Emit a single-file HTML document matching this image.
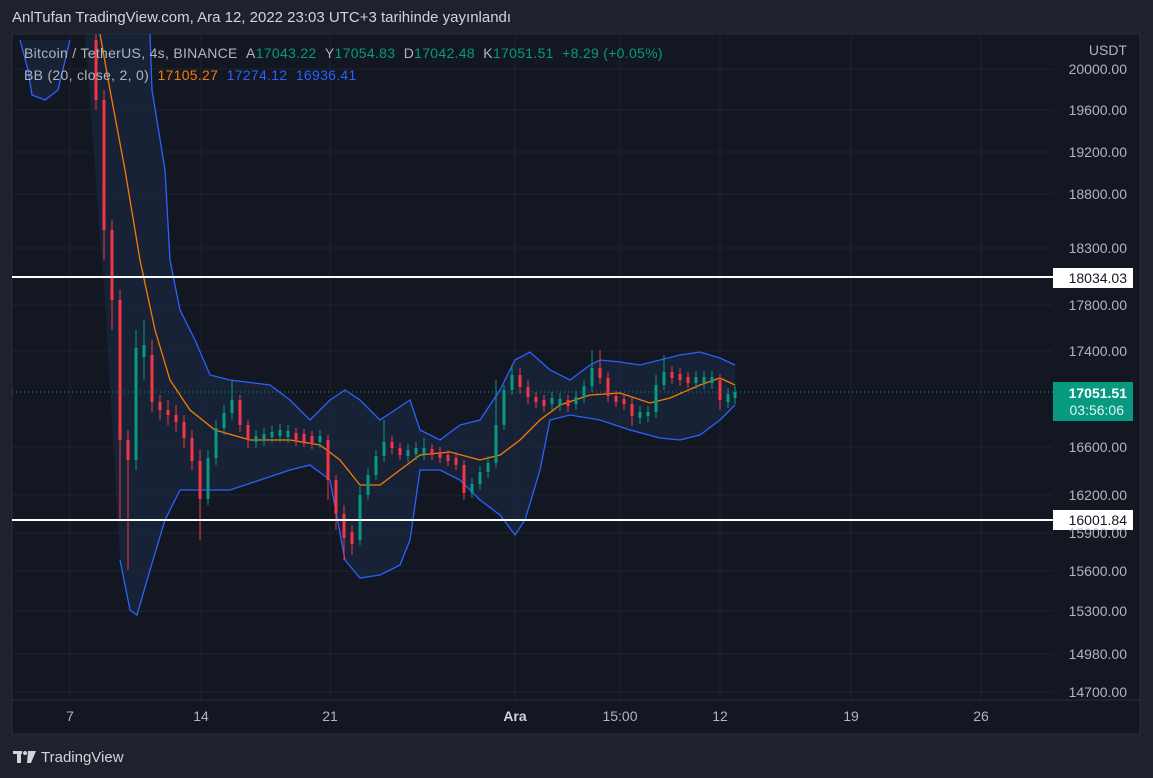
<!DOCTYPE html>
<html><head><meta charset="utf-8"><style>
body{margin:0;width:1153px;height:778px;background:#1f222c;overflow:hidden;font-family:"Liberation Sans",sans-serif;position:relative}
.t{position:absolute;white-space:nowrap}
</style></head><body>
<div class="t" style="left:12px;top:9px;font-size:15px;color:#d1d4dc">AnlTufan TradingView.com, Ara 12, 2022 23:03 UTC+3 tarihinde yayınlandı</div>
<svg xmlns="http://www.w3.org/2000/svg" style="position:absolute;left:0;top:0" width="1153" height="778">
<rect x="12" y="34" width="1128" height="700" fill="#131722" stroke="#2a2e39"/>
<g stroke="#1f2330" stroke-width="1">
<line x1="12" x2="1053" y1="69" y2="69"/><line x1="12" x2="1053" y1="110" y2="110"/><line x1="12" x2="1053" y1="152" y2="152"/><line x1="12" x2="1053" y1="194" y2="194"/><line x1="12" x2="1053" y1="248" y2="248"/><line x1="12" x2="1053" y1="305" y2="305"/><line x1="12" x2="1053" y1="351" y2="351"/><line x1="12" x2="1053" y1="447" y2="447"/><line x1="12" x2="1053" y1="495" y2="495"/><line x1="12" x2="1053" y1="533" y2="533"/><line x1="12" x2="1053" y1="571" y2="571"/><line x1="12" x2="1053" y1="611" y2="611"/><line x1="12" x2="1053" y1="654" y2="654"/><line x1="12" x2="1053" y1="692" y2="692"/>
<line x1="70" x2="70" y1="34" y2="700"/><line x1="201" x2="201" y1="34" y2="700"/><line x1="330" x2="330" y1="34" y2="700"/><line x1="515" x2="515" y1="34" y2="700"/><line x1="620" x2="620" y1="34" y2="700"/><line x1="720" x2="720" y1="34" y2="700"/><line x1="851" x2="851" y1="34" y2="700"/><line x1="981" x2="981" y1="34" y2="700"/>
</g>
<line x1="12" x2="1140" y1="700" y2="700" stroke="#2a2e39"/>
<polygon fill="#1c2a44" fill-opacity="0.6" points="20,40 28,70 32,95 45,100 58,90 70,40"/>
<polygon fill="#1c2a44" fill-opacity="0.6" points="85,34 150,34 152,90 165,170 170,260 180,310 195,340 210,375 230,380 270,385 290,400 310,420 330,400 345,390 360,400 380,420 395,410 410,400 420,430 440,440 460,425 480,420 500,390 515,360 530,352 550,370 570,380 590,365 600,360 620,362 640,365 660,360 680,355 700,352 720,358 735,365 735,405 720,420 700,435 680,440 660,438 630,430 600,420 570,415 550,420 540,470 525,520 515,535 500,515 480,500 460,480 440,470 420,470 410,540 400,565 380,575 360,578 345,560 330,480 310,465 290,470 260,480 230,490 200,490 180,490 165,520 150,570 137,615 130,610 120,560 105,300"/>
<polyline fill="none" stroke="#2962ff" stroke-width="1.3" points="20,40 28,70 32,95 45,100 58,90 70,40"/>
<polyline fill="none" stroke="#2962ff" stroke-width="1.3" points="150,34 152,90 165,170 170,260 180,310 195,340 210,375 230,380 270,385 290,400 310,420 330,400 345,390 360,400 380,420 395,410 410,400 420,430 440,440 460,425 480,420 500,390 515,360 530,352 550,370 570,380 590,365 600,360 620,362 640,365 660,360 680,355 700,352 720,358 735,365"/>
<polyline fill="none" stroke="#2962ff" stroke-width="1.3" points="120,560 130,610 137,615 150,570 165,520 180,490 200,490 230,490 260,480 290,470 310,465 330,480 345,560 360,578 380,575 400,565 410,540 420,470 440,470 460,480 480,500 500,515 515,535 525,520 540,470 550,420 570,415 600,420 630,430 660,438 680,440 700,435 720,420 735,405"/>
<polyline fill="none" stroke="#f57c00" stroke-width="1.3" points="100,34 110,90 125,170 140,260 155,330 170,380 190,410 215,430 250,440 290,440 320,445 340,460 360,485 380,485 400,470 420,455 450,452 480,460 500,455 520,440 540,420 560,405 590,395 620,393 650,403 670,398 700,385 720,378 735,385"/>
<path fill="none" stroke="#f23645" stroke-width="1" d="M96 34V110 M104 90V260 M112 220V330 M120 290V520 M128 430V570 M152 340V412 M160 395V420 M168 400V425 M176 405V432 M184 415V448 M192 430V470 M200 450V540 M240 395V432 M248 420V448 M296 428V446 M304 429V447 M312 431V449 M328 435V500 M336 475V530 M344 505V560 M352 525V555 M392 436V454 M400 443V460 M432 444V460 M440 447V463 M448 450V466 M456 452V470 M464 460V500 M520 368V394 M528 380V404 M536 392V408 M544 395V412 M568 395V412 M600 350V384 M608 372V402 M616 391V407 M624 394V410 M632 398V426 M672 366V384 M680 368V386 M688 372V388 M720 374V410"/>
<path fill="none" stroke="#f23645" stroke-width="3" d="M96 40V100 M104 100V230 M112 230V300 M120 300V440 M128 440V460 M152 355V402 M160 402V410 M168 410V415 M176 415V422 M184 422V438 M192 438V461 M200 461V499 M240 400V425 M248 425V440 M296 433V441 M304 434V442 M312 436V444 M328 440V480 M336 480V514 M344 514V538 M352 532V544 M392 442V448 M400 448V455 M432 449V455 M440 452V458 M448 455V461 M456 458V465 M464 465V493 M520 375V387 M528 387V397 M536 397V402 M544 400V406 M568 400V406 M600 368V378 M608 378V396 M616 396V402 M624 399V404 M632 404V416 M672 372V378 M680 374V380 M688 377V383 M720 380V400"/>
<path fill="none" stroke="#089981" stroke-width="1" d="M136 330V470 M144 320V380 M208 450V505 M216 420V465 M224 405V435 M232 380V420 M256 430V448 M264 428V446 M272 426V443 M280 424V442 M288 425V443 M320 430V448 M360 485V545 M368 468V500 M376 450V480 M384 420V462 M408 444V462 M416 442V460 M424 438V460 M472 478V498 M480 466V490 M488 456V478 M496 380V468 M504 385V430 M512 365V395 M552 392V410 M560 393V411 M576 391V410 M584 380V403 M592 350V392 M640 406V424 M648 406V422 M656 375V418 M664 355V390 M696 371V389 M704 371V389 M712 371V389 M728 388V408 M735 386V404"/>
<path fill="none" stroke="#089981" stroke-width="3" d="M136 348V460 M144 345V357 M208 458V499 M216 428V458 M224 413V428 M232 400V413 M256 436V442 M264 434V440 M272 432V437 M280 430V436 M288 431V437 M320 436V442 M360 495V540 M368 475V495 M376 456V475 M384 442V456 M408 450V456 M416 448V454 M424 448V454 M472 484V493 M480 472V484 M488 463V472 M496 425V463 M504 390V425 M512 375V390 M552 398V404 M560 399V405 M576 397V404 M584 386V397 M592 368V386 M640 412V418 M648 412V416 M656 385V412 M664 372V385 M696 377V383 M704 377V383 M712 377V383 M728 394V402 M735 392V398"/>
<line x1="12" x2="1053" y1="392" y2="392" stroke="#089981" stroke-dasharray="1,3"/>
<line x1="12" x2="1053" y1="277" y2="277" stroke="#fff" stroke-width="2"/>
<line x1="12" x2="1053" y1="520" y2="520" stroke="#fff" stroke-width="2"/>
<rect x="1053" y="268" width="80" height="20" fill="#fff"/>
<rect x="1053" y="510" width="80" height="20" fill="#fff"/>
<rect x="1053" y="382" width="80" height="39" fill="#089981"/>
<g font-family="Liberation Sans,sans-serif" font-size="14" fill="#b2b5be" text-anchor="end">
<text x="1127" y="55">USDT</text>
<text x="1127" y="74">20000.00</text><text x="1127" y="115">19600.00</text><text x="1127" y="157">19200.00</text><text x="1127" y="199">18800.00</text><text x="1127" y="253">18300.00</text><text x="1127" y="310">17800.00</text><text x="1127" y="356">17400.00</text><text x="1127" y="452">16600.00</text><text x="1127" y="500">16200.00</text><text x="1127" y="538">15900.00</text><text x="1127" y="576">15600.00</text><text x="1127" y="616">15300.00</text><text x="1127" y="659">14980.00</text><text x="1127" y="697">14700.00</text>
<text x="1127" y="283" fill="#131722">18034.03</text><text x="1127" y="525" fill="#131722">16001.84</text>
<text x="1127" y="398" fill="#fff" font-weight="bold">17051.51</text><text x="1124" y="415" fill="#e0f2ef">03:56:06</text>
</g>
<g font-family="Liberation Sans,sans-serif" font-size="14" fill="#b2b5be" text-anchor="middle">
<text x="70" y="721">7</text><text x="201" y="721">14</text><text x="330" y="721">21</text><text x="515" y="721" fill="#d1d4dc" font-weight="bold">Ara</text><text x="620" y="721">15:00</text><text x="720" y="721">12</text><text x="851" y="721">19</text><text x="981" y="721">26</text>
</g>
<g fill="#d1d4dc"><rect x="13" y="751" width="9" height="3"/><rect x="17" y="751" width="4" height="12"/><circle cx="25" cy="753" r="2"/><polygon points="28,751 36,751 31,763 27,763"/></g>
<text x="41" y="762" font-family="Liberation Sans,sans-serif" font-size="15" fill="#d1d4dc">TradingView</text>
</svg>
<div class="t" style="left:24px;top:45px;font-size:14px;color:#b2b5be;letter-spacing:0.3px">Bitcoin / TetherUS, 4s, BINANCE &nbsp;A<span style="color:#089981">17043.22</span> &nbsp;Y<span style="color:#089981">17054.83</span> &nbsp;D<span style="color:#089981">17042.48</span> &nbsp;K<span style="color:#089981">17051.51 &nbsp;+8.29 (+0.05%)</span></div>
<div class="t" style="left:24px;top:67px;font-size:14px;color:#b2b5be;letter-spacing:0.3px">BB (20, close, 2, 0) &nbsp;<span style="color:#f57c00">17105.27</span> &nbsp;<span style="color:#2962ff">17274.12</span> &nbsp;<span style="color:#2962ff">16936.41</span></div>
</body></html>
